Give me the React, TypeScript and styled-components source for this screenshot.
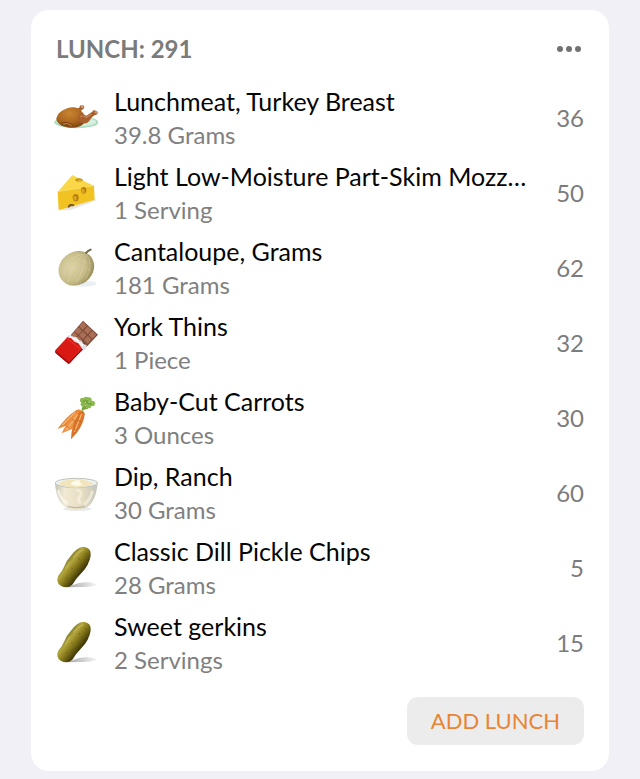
import React from "react";
import styled, { createGlobalStyle } from "styled-components";

const GlobalStyle = createGlobalStyle`
  *, *::before, *::after { box-sizing: border-box; }
  body {
    margin: 0;
    background: #f1f0f6;
    font-family: Lato, "Open Sans", sans-serif;
    color: #050505;
  }
`;

const Page = styled.main`
  padding: 10px 31px 8px;
`;

const Card = styled.section`
  display: flex;
  flex-direction: column;
  padding: 13px 25px 26px 23px;
  border-radius: 18px;
  background: #ffffff;
`;

const Header = styled.header`
  display: flex;
  align-items: center;
  justify-content: space-between;
  height: 52px;
  margin-bottom: 5px;
  padding-left: 2px;
`;

const Heading = styled.h1`
  margin: 0;
  font-size: 24px;
  font-weight: 700;
  line-height: 32px;
  color: #7b7b7b;
`;

const MoreButton = styled.button`
  display: flex;
  align-items: center;
  justify-content: center;
  width: 30px;
  height: 32px;
  padding: 0;
  border: 0;
  background: transparent;
  color: #727272;
  cursor: pointer;
`;

const FoodList = styled.ul`
  margin: 0;
  padding: 0;
  list-style: none;
`;

const FoodRow = styled.li`
  display: flex;
  align-items: center;
  height: 75px;
`;

const Picture = styled.svg`
  flex: none;
  width: 44px;
  height: 51px;
  margin-right: 16px;
`;

const Details = styled.div`
  flex: 1;
  min-width: 0;
`;

const Name = styled.div`
  overflow: hidden;
  font-size: 25px;
  line-height: 33px;
  white-space: nowrap;
  text-overflow: ellipsis;
`;

const Amount = styled.div`
  font-size: 24px;
  line-height: 33px;
  color: #808080;
`;

const Calories = styled.div`
  flex: none;
  padding-left: 16px;
  font-size: 24px;
  line-height: 33px;
  color: #7c7c7c;
`;

const AddButton = styled.button`
  align-self: flex-end;
  height: 48px;
  margin-top: 17px;
  padding: 0 24px;
  border: 0;
  border-radius: 11px;
  background: #ececec;
  color: #e98434;
  font-family: inherit;
  font-size: 22px;
  line-height: 32px;
  cursor: pointer;
`;

const Turkey = () => (
  <Picture viewBox="24 -3 132 153" aria-hidden="true">
    <defs>
      <radialGradient id="roast" cx="0.45" cy="0.3" r="0.75">
        <stop offset="0" stopColor="#c98530" />
        <stop offset="0.6" stopColor="#ab651f" />
        <stop offset="1" stopColor="#74400f" />
      </radialGradient>
    </defs>
    <ellipse cx="91" cy="88" rx="66" ry="18" fill="#a9dbbd" />
    <ellipse cx="91" cy="87" rx="60" ry="14" fill="#d5eedd" />
    <path d="M92 47 L100 44 Q101 35 109 37 Q119 39 113 47 Q106 50 101 58 L96 64Z" fill="#a36232" />
    <path d="M31 76 Q36 56 60 47 Q91 36 106 54 Q125 72 114 91 Q101 106 72 104 Q32 100 31 76Z" fill="url(#roast)" />
    <path d="M97 66 Q107 59 121 68 L139 56 Q142 49 150 53 Q160 59 151 65 Q139 67 132 81 Q124 94 108 91 Q92 83 97 66Z" fill="#a7602d" />
    <path d="M102 72 Q111 65 121 73 L137 63" stroke="#c58350" strokeWidth="4" fill="none" />
    <path d="M45 91 Q59 80 82 96 Q68 102 52 98" fill="#7f4517" />
    <path d="M51 93 Q65 88 77 98" stroke="#c98c4c" strokeWidth="3" fill="none" />
    <circle cx="109" cy="41" r="4" fill="#d5a07b" />
    <circle cx="150" cy="58" r="4" fill="#cc9270" />
  </Picture>
);

const Cheese = () => (
  <Picture viewBox="24 6 132 153" aria-hidden="true">
    <defs>
      <linearGradient id="rind" x1="0" y1="0" x2="1" y2="1">
        <stop offset="0" stopColor="#efc025" />
        <stop offset="1" stopColor="#f1c51e" />
      </linearGradient>
    </defs>
    <path d="M40 136 L145 102 L154 106 L72 136Z" fill="#e8e7e5" />
    <path d="M35 81 L79 30 L144 63Z" fill="#f9d748" />
    <path d="M35 80 L144 62 L146 104 L38 136Z" fill="url(#rind)" />
    <path d="M35 80 L144 62" stroke="#fbdf62" strokeWidth="2" />
    <ellipse cx="99" cy="45" rx="11" ry="5" fill="#c28f12" />
    <ellipse cx="101" cy="47" rx="7" ry="3" fill="#e5b62b" />
    <ellipse cx="113" cy="76" rx="8" ry="10" fill="#b57c12" />
    <ellipse cx="111" cy="78" rx="5" ry="7" fill="#dca51f" />
    <ellipse cx="89" cy="98" rx="9" ry="11" fill="#b57c12" />
    <ellipse cx="87" cy="100" rx="5" ry="7" fill="#dca51f" />
    <path d="M65 128 Q67 116 76 117 Q84 116 86 122Z" fill="#735019" />
    <path d="M70 126 Q76 120 82 123" fill="#f5eedc" />
  </Picture>
);

const Melon = () => (
  <Picture viewBox="24 9 132 153" aria-hidden="true">
    <defs>
      <radialGradient id="melon" cx="0.4" cy="0.38" r="0.66">
        <stop offset="0" stopColor="#dcd3a6" />
        <stop offset="0.65" stopColor="#c8bc89" />
        <stop offset="1" stopColor="#978b58" />
      </radialGradient>
    </defs>
    <ellipse cx="109" cy="134" rx="42" ry="9" fill="#ebeff3" />
    <ellipse cx="91" cy="88" rx="56" ry="49" transform="rotate(-38 91 88)" fill="url(#melon)" />
    <g fill="none" stroke="#e1d9b4" strokeWidth="2" opacity="0.6">
      <path d="M120 43 Q54 52 53 112" />
      <path d="M120 43 Q77 70 67 130" />
      <path d="M120 43 Q115 88 90 136" />
      <path d="M120 43 Q145 78 119 121" />
      <path d="M48 75 Q91 68 135 96 M62 50 Q110 67 143 76 M47 100 Q79 98 105 132" opacity="0.5" />
    </g>
    <path d="M120 42 L126 36 L134 32" stroke="#706b50" strokeWidth="6" strokeLinecap="round" fill="none" />
  </Picture>
);

const Chocolate = () => (
  <Picture viewBox="24 12 132 153" aria-hidden="true">
    <path d="M111 23 L156 65 L122 101 L75 65Z" fill="#7b4937" />
    <g fill="#a96e55">
      <path d="M111 27 L122 38 L110 51 L99 40Z" />
      <path d="M125 40 L137 51 L125 64 L113 53Z" />
      <path d="M139 53 L151 65 L140 77 L127 66Z" />
      <path d="M97 42 L108 53 L97 65 L85 54Z" />
      <path d="M110 55 L122 66 L111 79 L99 67Z" />
      <path d="M125 68 L137 79 L125 93 L113 81Z" />
      <path d="M84 57 L95 67 L84 77 L73 68Z" />
      <path d="M97 69 L109 81 L100 91 L86 79Z" />
    </g>
    <path d="M64 69 L72 66 L83 71 L91 72 L99 81 L108 85 L113 94 L122 96 L119 108 L104 118 L57 78Z" fill="#dedee3" />
    <path d="M70 71 L81 77 L91 79 L98 89 L112 98" stroke="#fafafa" strokeWidth="5" fill="none" />
    <path d="M64 73 L76 76 L85 86 L97 91 L109 109 L74 148 Q70 154 64 149 L29 119 Q24 115 29 110Z" fill="#d81914" />
    <path d="M64 77 L104 109 L70 145" fill="none" stroke="#ed392d" strokeWidth="3" />
    <path d="M29 117 L68 150 L109 108" fill="none" stroke="#a70f0e" strokeWidth="5" />
  </Picture>
);

const Carrots = () => (
  <Picture viewBox="24 9 132 153" aria-hidden="true">
    <g stroke="#76a43d" strokeWidth="5" strokeLinecap="round" fill="none">
      <path d="M109 63 L115 43 L107 30 M112 58 L128 47 L142 48 M115 49 L127 35 M109 61 L124 57" />
    </g>
    <g fill="#8ab94d">
      <circle cx="110" cy="34" r="8" />
      <circle cx="120" cy="30" r="7" />
      <circle cx="129" cy="33" r="8" />
      <circle cx="139" cy="43" r="8" />
      <circle cx="128" cy="50" r="8" />
      <circle cx="111" cy="46" r="7" />
    </g>
    <path d="M111 38 L121 35 L126 43 L136 45" stroke="#6b9a38" strokeWidth="4" fill="none" />
    <path d="M88 65 Q101 57 107 66 L104 79 L76 104 L34 120 Q61 83 88 65Z" fill="#e48535" />
    <path d="M92 70 Q107 58 115 73 L106 91 L80 119 L47 133 Q57 108 92 70Z" fill="#ef9245" />
    <path d="M99 69 Q115 60 116 76 Q113 105 92 132 L75 151 Q75 112 99 69Z" fill="#da742a" />
    <path d="M88 70 L49 109 M95 77 L61 123 M107 75 L85 129" stroke="#f6b36d" strokeWidth="4" fill="none" />
    <path d="M78 90 L88 98 M62 111 L70 117 M95 94 L105 98 M83 120 L91 124" stroke="#ad581f" strokeWidth="2" />
  </Picture>
);

const Dip = () => (
  <Picture viewBox="24 -6 132 153" aria-hidden="true">
    <defs>
      <linearGradient id="glass" x1="0" y1="0" x2="1" y2="0">
        <stop offset="0" stopColor="#c5c5b8" />
        <stop offset="0.22" stopColor="#f2ead3" />
        <stop offset="0.65" stopColor="#e6dcc2" />
        <stop offset="1" stopColor="#c4c5bc" />
      </linearGradient>
    </defs>
    <ellipse cx="94" cy="120" rx="42" ry="6" fill="#e8eaeb" />
    <path d="M27 42 Q31 99 63 118 Q91 127 121 117 Q151 98 155 40Z" fill="url(#glass)" />
    <ellipse cx="91" cy="42" rx="63" ry="14" fill="#eef2ee" stroke="#bbc4c1" strokeWidth="3" />
    <path d="M37 44 Q55 30 83 33 Q104 24 120 35 L144 43 Q129 55 90 56 Q53 55 37 44Z" fill="#f3e5bb" />
    <path d="M73 46 Q89 28 105 36 Q94 42 112 46 Q94 55 73 46Z" fill="#fffbed" />
    <path d="M36 63 Q45 94 64 104" stroke="#fffdf4" strokeWidth="9" fill="none" opacity="0.6" />
    <path d="M91 63 Q111 66 103 81 Q91 94 105 103 M139 65 Q135 89 115 107" stroke="#faf5e4" strokeWidth="9" fill="none" opacity="0.6" />
    <path d="M65 113 Q91 119 117 113" stroke="#aeb1a5" strokeWidth="3" fill="none" />
  </Picture>
);

const Pickle = () => (
  <Picture viewBox="24 9 132 153" aria-hidden="true">
    <defs>
      <linearGradient id="pickle" gradientUnits="userSpaceOnUse" x1="58" y1="68" x2="104" y2="104">
        <stop offset="0" stopColor="#7f7a27" />
        <stop offset="0.25" stopColor="#b3a63c" />
        <stop offset="0.55" stopColor="#8a7c1d" />
        <stop offset="1" stopColor="#3c3405" />
      </linearGradient>
      <linearGradient id="shade" x1="0" y1="0" x2="1" y2="0">
        <stop offset="0" stopColor="#a5a5a5" />
        <stop offset="1" stopColor="#f3f3f3" />
      </linearGradient>
    </defs>
    <path d="M62 145 L99 132 Q133 126 151 136 Q151 143 112 144Z" fill="url(#shade)" />
    <path d="M76 49 Q92 25 113 23 Q137 26 134 50 Q129 79 107 101 Q90 118 79 137 Q64 151 44 140 Q28 129 37 110 Q48 99 55 82 Q61 65 76 49Z" fill="url(#pickle)" />
    <path d="M84 54 Q96 38 111 33 M60 88 L70 70" stroke="#cabf6c" strokeWidth="5" strokeLinecap="round" fill="none" opacity="0.5" />
    <g fill="#575417" opacity="0.3">
      <circle cx="99" cy="59" r="3" />
      <circle cx="78" cy="88" r="3" />
      <circle cx="62" cy="116" r="3" />
      <circle cx="119" cy="45" r="3" />
    </g>
  </Picture>
);

const foods = [
  { name: "Lunchmeat, Turkey Breast", amount: "39.8 Grams", calories: 36, Icon: Turkey },
  { name: "Light Low-Moisture Part-Skim Mozz…", amount: "1 Serving", calories: 50, Icon: Cheese },
  { name: "Cantaloupe, Grams", amount: "181 Grams", calories: 62, Icon: Melon },
  { name: "York Thins", amount: "1 Piece", calories: 32, Icon: Chocolate },
  { name: "Baby-Cut Carrots", amount: "3 Ounces", calories: 30, Icon: Carrots },
  { name: "Dip, Ranch", amount: "30 Grams", calories: 60, Icon: Dip },
  { name: "Classic Dill Pickle Chips", amount: "28 Grams", calories: 5, Icon: Pickle },
  { name: "Sweet gerkins", amount: "2 Servings", calories: 15, Icon: Pickle },
];

export default function App() {
  return (
    <>
      <GlobalStyle />
      <Page>
        <Card aria-labelledby="meal-title">
          <Header>
            <Heading id="meal-title">LUNCH: 291</Heading>
            <MoreButton type="button" aria-label="More options">
              <svg width="24" height="8" viewBox="0 0 24 8" fill="currentColor" aria-hidden="true">
                <circle cx="3" cy="4" r="3" />
                <circle cx="12" cy="4" r="3" />
                <circle cx="21" cy="4" r="3" />
              </svg>
            </MoreButton>
          </Header>
          <FoodList>
            {foods.map(({ name, amount, calories, Icon }) => (
              <FoodRow key={name}>
                <Icon />
                <Details>
                  <Name>{name}</Name>
                  <Amount>{amount}</Amount>
                </Details>
                <Calories>{calories}</Calories>
              </FoodRow>
            ))}
          </FoodList>
          <AddButton type="button">ADD LUNCH</AddButton>
        </Card>
      </Page>
    </>
  );
}
